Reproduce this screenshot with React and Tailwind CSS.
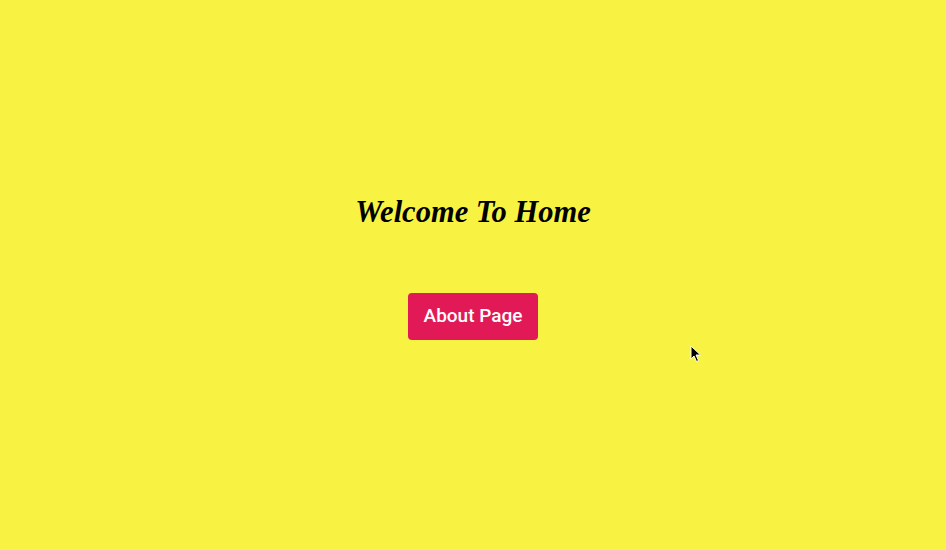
export default function App() {
  return (
    <div className="relative w-full h-[550px] bg-[#f8f342] flex flex-col items-center overflow-hidden">
      <h1 className="mt-[190px] text-[30.5px] leading-[44px] font-bold italic text-black" style={{ fontFamily: '"Liberation Serif", "Times New Roman", serif' }}>
        Welcome To Home
      </h1>
      <button className="mt-[59px] h-[47px] px-[16px] rounded bg-[#e11a57] text-white text-[19px] font-medium" style={{ fontFamily: 'Roboto, "Liberation Sans", Arial, sans-serif' }}>
        About Page
      </button>
      <svg className="absolute left-[690px] top-[345px]" width="12" height="18" viewBox="0 0 12 18">
        <path d="M1 1 L1 14 L4 11 L6.5 16.5 L8.5 15.5 L6 10 L10.5 10 Z" fill="black" stroke="white" strokeWidth="1" />
      </svg>
    </div>
  );
}
